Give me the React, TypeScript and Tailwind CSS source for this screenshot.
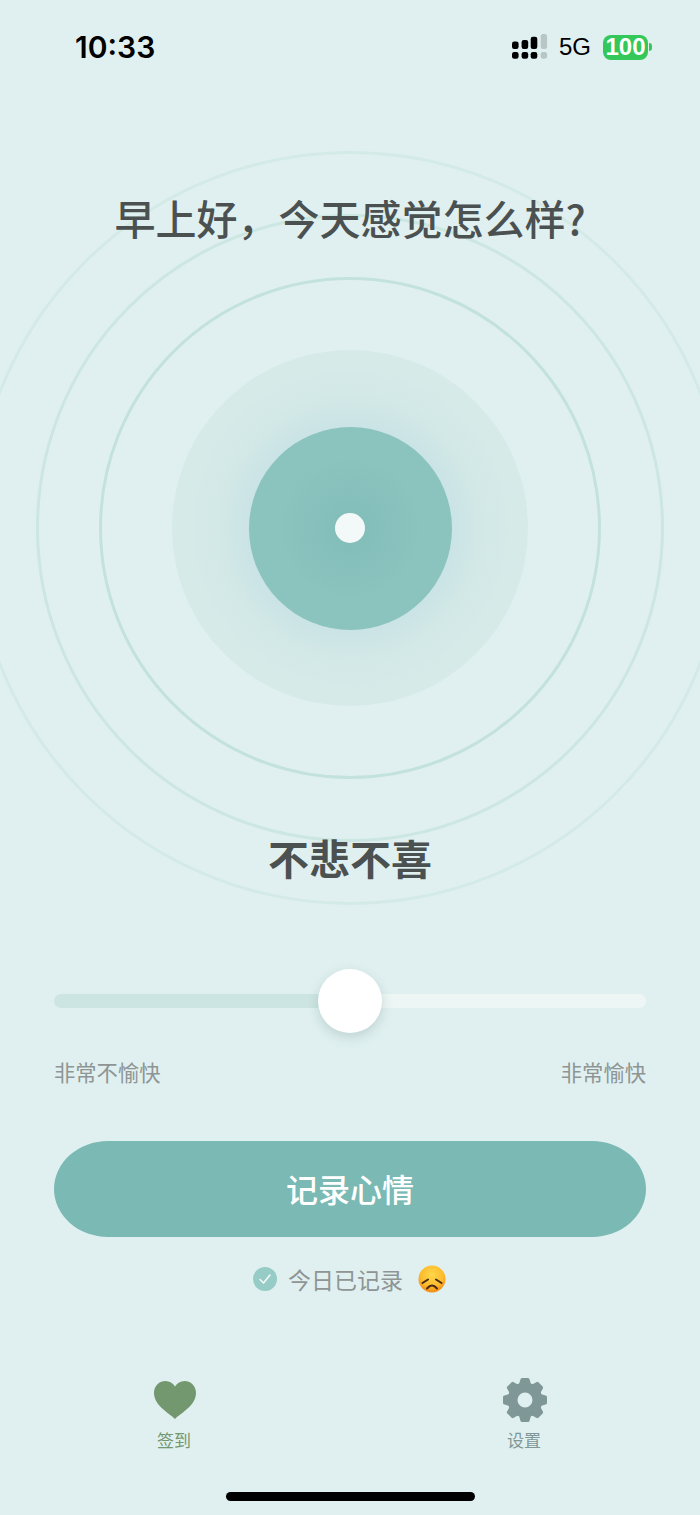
const cjk = "font-['Noto_Sans_CJK_SC','Noto_Sans',sans-serif]";

function SignalIcon() {
  return (
    <svg width="37" height="26" viewBox="0 0 37 26" className="block">
      <rect x="1" y="7.6" width="6.6" height="7.4" rx="2.2" fill="#000" />
      <rect x="1" y="18" width="6.6" height="6.7" rx="2.2" fill="#000" />
      <rect x="10.6" y="6" width="6.6" height="9" rx="2.2" fill="#000" />
      <rect x="10.6" y="18" width="6.6" height="6.7" rx="2.2" fill="#000" />
      <rect x="19.7" y="2.7" width="6.6" height="12.3" rx="2.2" fill="#000" />
      <rect x="19.7" y="18" width="6.6" height="6.7" rx="2.2" fill="#000" />
      <rect x="29.7" y="0" width="6.4" height="15" rx="2.2" fill="#b9c6c6" />
      <rect x="29.7" y="18" width="6.4" height="6.7" rx="2.2" fill="#b9c6c6" />
    </svg>
  );
}

function Battery() {
  return (
    <div className="flex items-center">
      <div className="w-[45px] h-[25px] rounded-[8px] bg-[#34c759] flex items-center justify-center text-white text-[24px] font-bold leading-none font-['Liberation_Sans',sans-serif]">
        100
      </div>
      <div className="w-[3px] h-[8px] ml-[1px] rounded-r-full bg-[#34c759]" />
    </div>
  );
}

function SadEmoji() {
  return (
    <svg width="28" height="28" viewBox="0 0 28 28" className="block mr-[1px]">
      <defs>
        <radialGradient id="face" cx="50%" cy="35%" r="65%">
          <stop offset="0%" stopColor="#ffd84a" />
          <stop offset="65%" stopColor="#fdbb2e" />
          <stop offset="100%" stopColor="#f28a14" />
        </radialGradient>
      </defs>
      <circle cx="14" cy="14" r="13.5" fill="url(#face)" />
      <path d="M4.5 18 L10 14.5" stroke="#4a2b12" strokeWidth="2" strokeLinecap="round" fill="none" />
      <path d="M23.5 18 L18 14.5" stroke="#4a2b12" strokeWidth="2" strokeLinecap="round" fill="none" />
      <path d="M9 23.5 Q14 17.5 19 23.5" stroke="#4a2b12" strokeWidth="2" strokeLinecap="round" fill="none" />
    </svg>
  );
}

function Gear() {
  const teeth = [0, 45, 90, 135, 180, 225, 270, 315];
  return (
    <svg width="44" height="44" viewBox="-22 -22 44 44" className="block ml-[2px]" fill="#7f9797">
      <circle r="12.5" fill="none" stroke="#7f9797" strokeWidth="10" />
      {teeth.map((a) => (
        <path
          key={a}
          transform={`rotate(${a})`}
          d="M-6.5 -14 L-4.6 -20.5 Q-4.3 -22 -3 -22 L3 -22 Q4.3 -22 4.6 -20.5 L6.5 -14 Z"
        />
      ))}
    </svg>
  );
}

export default function App() {
  return (
    <div className={`relative w-[700px] h-[1515px] overflow-hidden bg-[#e0f0f0] ${cjk}`}>
      {/* Rings behind the content */}
      <div className="absolute left-[350px] top-[528px] w-0 h-0 flex items-center justify-center">
        <div className="absolute shrink-0 w-[754px] h-[754px] rounded-full border-[3px] border-[#d4eae7]" />
        <div className="absolute shrink-0 w-[628px] h-[628px] rounded-full border-[3px] border-[#cce6e2]" />
        <div className="absolute shrink-0 w-[502px] h-[502px] rounded-full border-[3px] border-[#c3e2dd]" />
        <div className="absolute shrink-0 w-[356px] h-[356px] rounded-full bg-[radial-gradient(circle_closest-side,#cae3e5_57%,#d2e8e7_72%,#d6eae8_90%)]" />
        <div className="absolute shrink-0 w-[203px] h-[203px] rounded-full bg-[radial-gradient(circle_closest-side,#82bdb9_0%,#8bc3be_70%)] flex items-center justify-center">
          <div className="w-[30px] h-[30px] rounded-full bg-[#f3f9f9]" />
        </div>
      </div>

      <div className="relative flex flex-col">
        {/* Status bar */}
        <div className="flex items-center justify-between h-[94px] pl-[75px] pr-[48px]">
          <span className="text-[30px] font-semibold text-black leading-none font-['Inter',sans-serif]">10:33</span>
          <div className="flex items-center">
            <SignalIcon />
            <span className="ml-[11px] mr-[12px] text-[24px] text-black leading-none font-['Liberation_Sans',sans-serif]">5G</span>
            <Battery />
          </div>
        </div>

        <h1 className="mt-[92px] text-center text-[41px] leading-[62px] font-medium text-[#4b5150]">
          早上好，今天感觉怎么样?
        </h1>

        <div className="mt-[579px] text-center text-[41px] leading-[60px] font-bold text-[#4b5150]">不悲不喜</div>

        {/* Slider */}
        <div className="relative mx-[54px] mt-[107px] h-[14px] flex">
          <div className="w-1/2 rounded-l-full bg-[#cde5e2]" />
          <div className="w-1/2 rounded-r-full bg-[#edf6f5]" />
          <div className="absolute left-[264px] -top-[25px] w-[64px] h-[64px] rounded-full bg-white shadow-[0_4px_12px_rgba(70,110,105,0.22)]" />
        </div>

        <div className="flex justify-between mx-[54px] mt-[48px] text-[21.3px] leading-[32px] text-[#8e9594]">
          <span>非常不愉快</span>
          <span>非常愉快</span>
        </div>

        <button className="mx-[54px] mt-[53px] h-[96px] pb-[3px] rounded-[54px/48px] bg-[#7bb9b4] text-white text-[32px] font-medium leading-none">
          记录心情
        </button>

        <div className="flex items-center justify-center mt-[24px] h-[36px]">
          <div className="w-[24px] h-[24px] rounded-full bg-[#97cbc6] flex items-center justify-center">
            <svg width="14" height="14" viewBox="0 0 14 14" fill="none">
              <path d="M2 7.5 L5.5 11 L12 3" stroke="#f3f9f9" strokeWidth="1.6" strokeLinecap="round" strokeLinejoin="round" />
            </svg>
          </div>
          <span className="ml-[11px] mr-[15px] text-[23px] leading-none text-[#8e9594]">今日已记录</span>
          <SadEmoji />
        </div>

        {/* Tab bar */}
        <div className="flex justify-between mt-[81px] pl-[147px] pr-[149px]">
          <div className="w-[54px] flex flex-col items-center">
            <div className="h-[44px] flex items-center ml-[2px]">
              <svg width="42" height="38" viewBox="0 0 42 38" className="block">
                <path
                  d="M21 38 C16 32.5 0 25 0 12 C0 4.5 5.5 0 11.5 0 C15.5 0 19 2.2 21 5.5 C23 2.2 26.5 0 30.5 0 C36.5 0 42 4.5 42 12 C42 25 26 32.5 21 38 Z"
                  fill="#73986f"
                />
              </svg>
            </div>
            <span className="mt-[6px] text-[17px] leading-[24px] text-[#73986f]">签到</span>
          </div>
          <div className="w-[54px] flex flex-col items-center">
            <Gear />
            <span className="mt-[6px] text-[17px] leading-[24px] text-[#7f9797]">设置</span>
          </div>
        </div>

        {/* Home indicator */}
        <div className="mx-auto mt-[40px] w-[249px] h-[9px] rounded-full bg-black" />
      </div>
    </div>
  );
}
